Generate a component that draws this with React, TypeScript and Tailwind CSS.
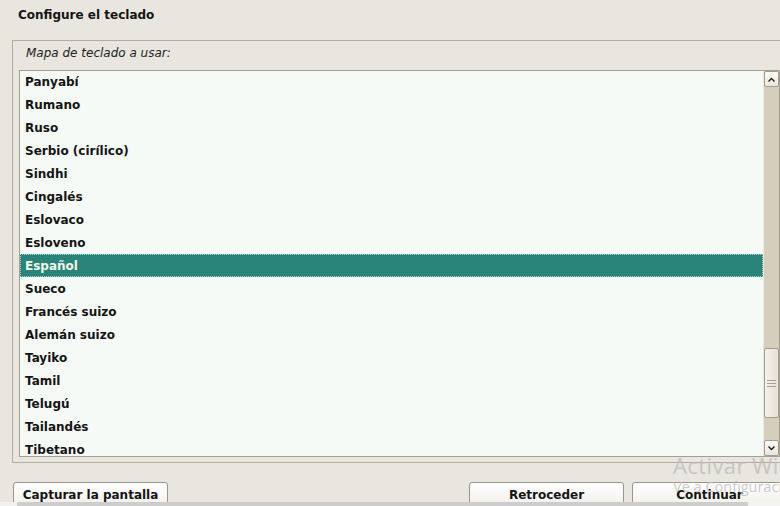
const layouts = [
  "Panyabí",
  "Rumano",
  "Ruso",
  "Serbio (cirílico)",
  "Sindhi",
  "Cingalés",
  "Eslovaco",
  "Esloveno",
  "Español",
  "Sueco",
  "Francés suizo",
  "Alemán suizo",
  "Tayiko",
  "Tamil",
  "Telugú",
  "Tailandés",
  "Tibetano",
  "Tigriña",
];

const selected = "Español";

function ScrollButton({ dir }: { dir: "up" | "down" }) {
  return (
    <div className="h-[16px] w-[15px] rounded-[2px] border border-[#a39b8b] bg-gradient-to-b from-[#fbfaf7] to-[#e9e6de] flex items-center justify-center">
      <svg width="7" height="5" viewBox="0 0 7 5">
        {dir === "up" ? (
          <path d="M0.5 4.5 L3.5 1.5 L6.5 4.5" stroke="#1e1e1e" strokeWidth="1.4" fill="none" />
        ) : (
          <path d="M0.5 0.5 L3.5 3.5 L6.5 0.5" stroke="#1e1e1e" strokeWidth="1.4" fill="none" />
        )}
      </svg>
    </div>
  );
}

function Scrollbar() {
  return (
    <div className="w-[16px] bg-[#d6cebd] border-l border-[#ebe8e0] flex flex-col">
      <ScrollButton dir="up" />
      <div className="flex-1" />
      <div className="h-[70px] w-[15px] rounded-[2px] border border-[#a39b8b] bg-gradient-to-r from-[#f4f2ec] to-[#e6e2d8] flex flex-col items-center justify-center gap-[2px]">
        <div className="h-px w-[9px] bg-[#a8a090]" />
        <div className="h-px w-[9px] bg-[#a8a090]" />
        <div className="h-px w-[9px] bg-[#a8a090]" />
      </div>
      <div className="h-[22px]" />
      <ScrollButton dir="down" />
    </div>
  );
}

function Button({ label }: { label: string }) {
  return (
    <div className="h-[30px] w-[155px] shrink-0 rounded-[3px] border border-[#9b968b] bg-gradient-to-b from-[#ffffff] to-[#eeece6] flex justify-center pt-[3px] text-[12px] font-bold text-[#141414]">
      {label}
    </div>
  );
}

export default function App() {
  return (
    <div
      className="relative w-[780px] h-[506px] overflow-hidden bg-[#e8e6df] text-[#141414]"
      style={{ fontFamily: '"DejaVu Sans", Verdana, sans-serif' }}
    >
      <div className="h-[40px] pl-[18px] pt-[7px] text-[12px] font-bold leading-[16px]">
        Configure el teclado
      </div>

      <div className="ml-[12px] w-[800px] h-[423px] border border-[#b3ab9b] flex flex-col">
        <div className="h-[29px] pl-[13px] pt-[4px] text-[12px] italic leading-[17px] text-[#222]">
          Mapa de teclado a usar:
        </div>
        <div className="ml-[6px] w-[761px] h-[387px] border border-[#a69e8e] bg-[#f6faf7] flex">
          <div className="flex-1 overflow-hidden">
            <div className="-mt-[1px]">
              {layouts.map((name) => (
                <div
                  key={name}
                  className={`h-[23px] pl-[5px] flex items-center text-[12px] font-bold ${
                    name === selected
                      ? "bg-[#2a8479] text-[#f3f5ea] outline outline-1 outline-dotted outline-[#a9d0c8] -outline-offset-1"
                      : ""
                  }`}
                >
                  {name}
                </div>
              ))}
            </div>
          </div>
          <Scrollbar />
        </div>
      </div>

      <div className="mt-[19px] flex pl-[13px]">
        <Button label="Capturar la pantalla" />
        <div className="w-[301px] shrink-0" />
        <Button label="Retroceder" />
        <div className="w-[8px] shrink-0" />
        <Button label="Continuar" />
      </div>

      <div
        className="absolute left-[673px] top-[451px] text-[22px] leading-[28px] tracking-[0.4px] text-[#bcbcbc]/80 whitespace-nowrap"
        style={{ fontFamily: '"Open Sans", "Noto Sans", sans-serif' }}
      >
        Activar Windows
      </div>
      <div
        className="absolute left-[673px] top-[478px] text-[14.5px] leading-[18px] text-[#bcbcbc]/80 whitespace-nowrap"
        style={{ fontFamily: '"Open Sans", "Noto Sans", sans-serif' }}
      >
        Ve a Configuración para activar Windows.
      </div>

      <div className="absolute left-0 bottom-0 w-[780px] h-[4px] flex">
        <div className="w-[17px] bg-[#f0f0f0]" />
        <div className="w-[731px] bg-[#cdcdcd]" />
        <div className="flex-1 bg-[#f4f4f4]" />
      </div>
    </div>
  );
}
